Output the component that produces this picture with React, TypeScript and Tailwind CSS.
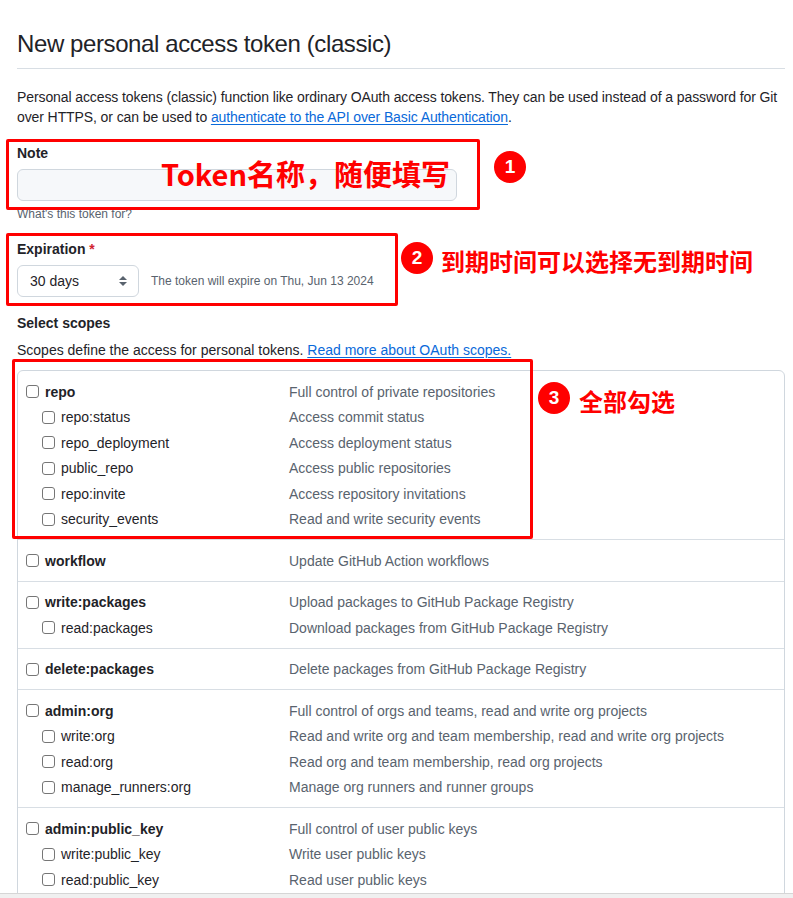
import React from 'react';

type Scope = {
  name: string;
  desc: string;
  children?: [string, string][];
};

const scopes: Scope[] = [
  {
    name: 'repo',
    desc: 'Full control of private repositories',
    children: [
      ['repo:status', 'Access commit status'],
      ['repo_deployment', 'Access deployment status'],
      ['public_repo', 'Access public repositories'],
      ['repo:invite', 'Access repository invitations'],
      ['security_events', 'Read and write security events'],
    ],
  },
  { name: 'workflow', desc: 'Update GitHub Action workflows' },
  {
    name: 'write:packages',
    desc: 'Upload packages to GitHub Package Registry',
    children: [['read:packages', 'Download packages from GitHub Package Registry']],
  },
  { name: 'delete:packages', desc: 'Delete packages from GitHub Package Registry' },
  {
    name: 'admin:org',
    desc: 'Full control of orgs and teams, read and write org projects',
    children: [
      ['write:org', 'Read and write org and team membership, read and write org projects'],
      ['read:org', 'Read org and team membership, read org projects'],
      ['manage_runners:org', 'Manage org runners and runner groups'],
    ],
  },
  {
    name: 'admin:public_key',
    desc: 'Full control of user public keys',
    children: [
      ['write:public_key', 'Write user public keys'],
      ['read:public_key', 'Read user public keys'],
    ],
  },
];

const Checkbox: React.FC = () => (
  <span className="inline-block w-[13px] h-[13px] shrink-0 rounded-[3px] border border-[#767676] bg-white" />
);

const ScopeRow: React.FC<{ name: string; desc: string; child?: boolean }> = ({ name, desc, child }) => (
  <div className="grid grid-cols-[263px_1fr] items-center h-[25.5px]">
    <label className={`flex items-center gap-[6px] ${child ? 'pl-4' : ''}`}>
      <Checkbox />
      <span className={child ? 'text-[#1f2328]' : 'font-bold text-[#1f2328]'}>{name}</span>
    </label>
    <span className="text-[#59636e]">{desc}</span>
  </div>
);

const Badge: React.FC<{ n: number; className: string }> = ({ n, className }) => (
  <div
    className={`absolute w-[32px] h-[32px] rounded-full bg-[#ff0000] text-white font-bold text-[19px] flex items-center justify-center font-['Liberation_Sans',sans-serif] ${className}`}
  >
    {n}
  </div>
);

const App: React.FC = () => {
  return (
    <div className="relative w-full h-[898px] flex flex-col bg-white overflow-hidden font-['Liberation_Sans',Arial,sans-serif] text-[14px] leading-[20px] text-[#1f2328]">
      <div className="flex-1 overflow-hidden pl-[17px] pr-[8px]">
        <h1 className="pt-[26px] pb-[6px] text-[24px] leading-[36px] font-normal tracking-[-0.4px] border-b border-[#d8dee4]">
          New personal access token (classic)
        </h1>

        <p className="mt-[18px] tracking-[-0.1px]">
          <span className="whitespace-nowrap">
            Personal access tokens (classic) function like ordinary OAuth access tokens. They can be used instead of a
            password for Git
          </span>
          <br />
          over HTTPS, or can be used to{' '}
          <a className="text-[#0969da] underline underline-offset-2">authenticate to the API over Basic Authentication</a>.
        </p>

        {/* Note */}
        <div className="mt-4">
          <div className="font-bold">Note</div>
          <div className="mt-[6px] w-[440px] h-[32px] rounded-md border border-[#d0d7de] bg-[#f6f8fa]" />
          <div className="mt-[4px] text-[12px] leading-[18px] text-[#59636e]">What's this token for?</div>
        </div>

        {/* Expiration */}
        <div className="mt-4">
          <div className="font-bold">
            Expiration <span className="text-[#d1242f]">*</span>
          </div>
          <div className="mt-[6px] flex items-center gap-3">
            <div className="w-[122px] h-[32px] rounded-md border border-[#d0d7de] bg-white flex items-center justify-between pl-3 pr-[10px]">
              <span>30 days</span>
              <svg width="10" height="12" viewBox="0 0 10 12" fill="#59636e">
                <path d="M5 1 L9 5 H1 Z" />
                <path d="M5 11 L9 7 H1 Z" />
              </svg>
            </div>
            <span className="text-[12px] text-[#59636e]">The token will expire on Thu, Jun 13 2024</span>
          </div>
        </div>

        {/* Scopes */}
        <div className="mt-4 font-bold">Select scopes</div>
        <p className="mt-[7px]">
          Scopes define the access for personal tokens.{' '}
          <a className="text-[#0969da] underline underline-offset-2">Read more about OAuth scopes.</a>
        </p>

        <div className="mt-[10px] rounded-md border border-[#d0d7de]">
          {scopes.map((s, i) => (
            <div key={s.name} className={`px-2 pt-2 pb-[7px] ${i > 0 ? 'border-t border-[#d8dee4]' : ''}`}>
              <ScopeRow name={s.name} desc={s.desc} />
              {s.children?.map(([n, d]) => (
                <ScopeRow key={n} name={n} desc={d} child />
              ))}
            </div>
          ))}
        </div>
      </div>

      <div className="h-[5px] shrink-0 bg-[#f0f0f0] border-t border-[#d6d6d6]" />

      {/* annotations */}
      <div className="absolute left-[6px] top-[139px] w-[474px] h-[71px] border-[3px] border-[#ff0000] rounded-[2px]" />
      <div className="absolute left-[6px] top-[233px] w-[392px] h-[73px] border-[3px] border-[#ff0000] rounded-[2px]" />
      <div className="absolute left-[12px] top-[359px] w-[521px] h-[180px] border-[3px] border-[#ff0000] rounded-[2px]" />

      <div className="absolute left-[161px] top-[159px] text-[29px] leading-[29px] font-bold text-[#ff0000] font-['Noto_Sans_CJK_SC',sans-serif] whitespace-nowrap">
        Token名称，随便填写
      </div>
      <Badge n={1} className="left-[494px] top-[151px]" />

      <Badge n={2} className="left-[401px] top-[242px]" />
      <div className="absolute left-[441px] top-[248px] text-[24px] leading-[26px] font-bold text-[#ff0000] font-['Noto_Sans_CJK_SC',sans-serif] whitespace-nowrap">
        到期时间可以选择无到期时间
      </div>

      <Badge n={3} className="left-[538px] top-[382px]" />
      <div className="absolute left-[579px] top-[388px] text-[24px] leading-[26px] font-bold text-[#ff0000] font-['Noto_Sans_CJK_SC',sans-serif] whitespace-nowrap">
        全部勾选
      </div>
    </div>
  );
};

export default App;
